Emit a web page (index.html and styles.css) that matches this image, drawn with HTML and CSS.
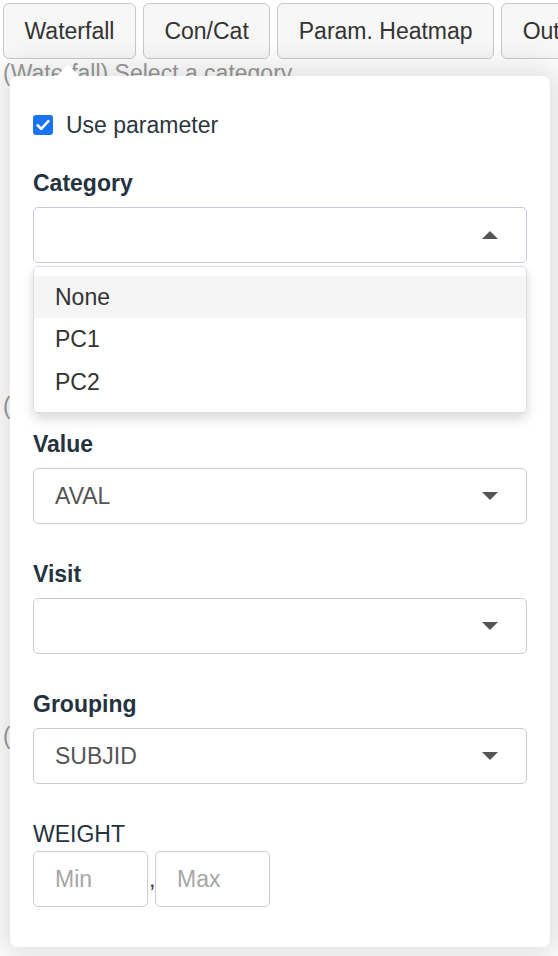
FILE: index.html
```html
<!DOCTYPE html>
<html lang="en">
<head>
<meta charset="utf-8">
<title>Waterfall settings</title>
<link rel="stylesheet" href="styles.css">
</head>
<body>
<div class="page">
  <div class="tabs">
    <button class="tab">Waterfall</button>
    <button class="tab">Con/Cat</button>
    <button class="tab">Param. Heatmap</button>
    <button class="tab">Outliers</button>
  </div>
  <p class="hint hint-first">(Waterfall) Select a category</p>
  <p class="hint hint-second">(Waterfall) Select a value</p>
  <p class="hint hint-third">(Waterfall) Select a grouping</p>

  <div class="popover">
    <label class="check-row">
      <span class="checkbox">
        <svg width="20" height="20" viewBox="0 0 20 20"><rect x="0" y="0" width="20" height="20" rx="3" fill="#1a73f0"/><path d="M4.6 10.3 L8.2 13.8 L15.4 6.2" fill="none" stroke="#fff" stroke-width="2.6" stroke-linecap="round" stroke-linejoin="round"/></svg>
      </span>
      <span class="check-text">Use parameter</span>
    </label>

    <div class="field">
      <div class="field-label">Category</div>
      <div class="select-wrap">
        <div class="select select-open">
          <span class="select-value"></span>
          <svg class="caret" width="16" height="8" viewBox="0 0 16 8"><path d="M0 8 L8 0 L16 8 Z" fill="#555"/></svg>
        </div>
        <ul class="dropdown">
          <li class="option option-active">None</li>
          <li class="option">PC1</li>
          <li class="option">PC2</li>
        </ul>
      </div>
    </div>

    <div class="field field-covered"></div>

    <div class="field">
      <div class="field-label">Value</div>
      <div class="select">
        <span class="select-value">AVAL</span>
        <svg class="caret" width="16" height="8" viewBox="0 0 16 8"><path d="M0 0 L16 0 L8 8 Z" fill="#555"/></svg>
      </div>
    </div>

    <div class="field">
      <div class="field-label">Visit</div>
      <div class="select">
        <span class="select-value"></span>
        <svg class="caret" width="16" height="8" viewBox="0 0 16 8"><path d="M0 0 L16 0 L8 8 Z" fill="#555"/></svg>
      </div>
    </div>

    <div class="field">
      <div class="field-label">Grouping</div>
      <div class="select">
        <span class="select-value">SUBJID</span>
        <svg class="caret" width="16" height="8" viewBox="0 0 16 8"><path d="M0 0 L16 0 L8 8 Z" fill="#555"/></svg>
      </div>
    </div>

    <div class="range-label">WEIGHT</div>
    <div class="range">
      <input class="range-input" type="text" placeholder="Min">
      <span class="range-sep">,</span>
      <input class="range-input" type="text" placeholder="Max">
    </div>
  </div>
</div>
</body>
</html>
```

FILE: styles.css
```css
* { box-sizing: border-box; }

html, body {
  margin: 0;
  padding: 0;
  background: #ffffff;
}

body {
  font-family: "Liberation Sans", Arial, sans-serif;
  width: 558px;
  height: 956px;
  overflow: hidden;
}

.page {
  position: relative;
  height: 956px;
  overflow: hidden;
}

.tabs {
  display: flex;
  gap: 7px;
  padding: 3px 3px 0 3px;
  overflow: hidden;
  white-space: nowrap;
}

.tab {
  flex-shrink: 0;
  height: 56px;
  padding: 0 20.5px;
  font-family: "Liberation Sans", Arial, sans-serif;
  font-size: 23px;
  color: #333333;
  background: #f7f7f7;
  border: 1px solid #c8c8c8;
  border-radius: 6px;
}

.hint {
  margin: 0;
  padding-left: 3px;
  font-size: 23px;
  line-height: 26px;
  color: #9a9a9a;
  white-space: nowrap;
}

.hint-first { margin-top: 1px; }
.hint-second { margin-top: 307px; }
.hint-third { margin-top: 304px; }

.popover {
  position: absolute;
  top: 76px;
  left: 10px;
  width: 540px;
  padding: 34px 23px 40px 23px;
  background: #ffffff;
  border-radius: 7px;
  box-shadow: 0 0 30px 10px rgba(0, 0, 0, 0.12);
}

.popover::before {
  content: "";
  position: absolute;
  top: -12px;
  left: 47px;
  width: 0;
  height: 0;
  border-left: 11px solid transparent;
  border-right: 11px solid transparent;
  border-bottom: 12px solid #ffffff;
}

.check-row {
  display: flex;
  align-items: center;
  gap: 13px;
  height: 30px;
  margin-bottom: 28px;
}

.checkbox {
  display: flex;
  width: 20px;
  height: 20px;
}

.check-text {
  font-size: 23px;
  color: #2b3641;
}

.field {
  margin-bottom: 35px;
}

.field-covered {
  height: 96px;
}

.field-label {
  font-size: 23px;
  font-weight: bold;
  line-height: 30px;
  color: #253240;
  margin-bottom: 9px;
}

.select-wrap {
  position: relative;
}

.select {
  display: flex;
  align-items: center;
  justify-content: space-between;
  height: 56px;
  padding: 0 28px 0 21px;
  border: 1px solid #cccccc;
  border-radius: 5px;
  background: #ffffff;
  font-size: 23px;
  color: #555555;
}

.select-open {
  border-color: #c3cad8;
}

.dropdown {
  position: absolute;
  top: calc(100% + 3px);
  left: 0;
  right: 0;
  margin: 0;
  padding: 9px 0;
  list-style: none;
  background: #ffffff;
  border: 1px solid #dddddd;
  border-radius: 5px;
  box-shadow: 0 6px 12px rgba(0, 0, 0, 0.15);
  z-index: 2;
}

.option {
  height: 42.33px;
  line-height: 42.33px;
  padding-left: 21px;
  font-size: 23px;
  color: #333333;
}

.option-active {
  background: #f5f5f5;
}

.range-label {
  font-size: 23px;
  line-height: 30px;
  color: #253240;
  margin-bottom: 2px;
}

.range {
  display: flex;
  align-items: baseline;
}

.range-input {
  width: 115px;
  height: 56px;
  padding: 0 0 0 21px;
  border: 1px solid #cccccc;
  border-radius: 5px;
  font-family: "Liberation Sans", Arial, sans-serif;
  font-size: 23px;
  color: #555555;
  background: #ffffff;
  outline: none;
}

.range-input::placeholder {
  color: #a6a6a6;
}

.range-sep {
  width: 7px;
  font-size: 23px;
  color: #333333;
  padding-left: 1px;
}
```
